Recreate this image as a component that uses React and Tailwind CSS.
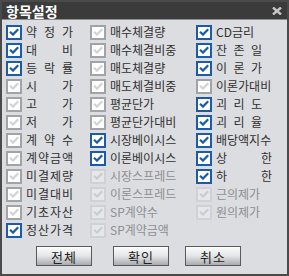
import React from "react";

function Box({ s }) {
  const cls =
    s === "on"
      ? "border-2 border-[#1c5ba6] bg-white"
      : s === "off"
      ? "border-2 border-[#a2a3a6] bg-white"
      : "border-2 border-[#d0d1d4] bg-[#e6e7ea]";
  const stroke = s === "on" ? "#1c5ba6" : s === "off" ? "#d2d3d5" : "#cbccce";
  return (
    <div className={`w-4 h-[15px] shrink-0 flex items-center justify-center ${cls}`}>
      <svg width="10" height="8" viewBox="0 0 10 8">
        <path d="M1 3.8 L4 6.6 L9.2 1.2" stroke={stroke} strokeWidth="2.2" fill="none" />
      </svg>
    </div>
  );
}

function Label({ t, w, s }) {
  const color = s === "dis" ? "text-[#8e8f92]" : "text-[#303030]";
  if (w) {
    const chars = t.split("");
    return (
      <div className={`flex justify-between ${color}`} style={{ width: w }}>
        {chars.map((c, i) => (
          <span key={i}>{c}</span>
        ))}
      </div>
    );
  }
  return <span className={`whitespace-nowrap ${color}`}>{t}</span>;
}

function Item({ t, w, s }) {
  return (
    <div className="h-[18px] flex items-center gap-1">
      <Box s={s} />
      <Label t={t} w={w} s={s} />
    </div>
  );
}

const col1 = [
  ["약정가", 47, "on"],
  ["대비", 47, "on"],
  ["등락률", 47, "on"],
  ["시가", 47, "off"],
  ["고가", 47, "off"],
  ["저가", 47, "off"],
  ["계약수", 47, "off"],
  ["계약금액", 47, "off"],
  ["미결제량", 47, "off"],
  ["미결대비", 47, "off"],
  ["기초자산", 47, "off"],
  ["정산가격", 47, "on"],
];
const col2 = [
  ["매수체결량", 0, "off"],
  ["매수체결비중", 0, "off"],
  ["매도체결량", 0, "off"],
  ["매도체결비중", 0, "off"],
  ["평균단가", 0, "off"],
  ["평균단가대비", 0, "off"],
  ["시장베이시스", 0, "on"],
  ["이론베이시스", 0, "on"],
  ["시장스프레드", 0, "dis"],
  ["이론스프레드", 0, "dis"],
  ["SP계약수", 0, "dis"],
  ["SP계약금액", 0, "dis"],
];
const col3 = [
  ["CD금리", 0, "on"],
  ["잔존일", 46, "on"],
  ["이론가", 46, "on"],
  ["이론가대비", 0, "off"],
  ["괴리도", 46, "on"],
  ["괴리율", 46, "on"],
  ["배당액지수", 0, "on"],
  ["상한", 56, "on"],
  ["하한", 56, "on"],
  ["근의제가", 0, "dis"],
  ["원의제가", 0, "dis"],
];

function Btn({ t, cls }) {
  return (
    <div
      className={`w-14 h-5 border border-[#5a5a5a] bg-gradient-to-b from-[#fbfbfb] via-[#e4e5e7] to-[#a9abae] flex items-center justify-center text-[13px] leading-none text-[#222] tracking-[1px] ${cls}`}
    >
      {t}
    </div>
  );
}

export default function App() {
  return (
    <div className="w-[289px] h-[276px] border-2 border-[#4a4a4a] bg-[#dcdde1] font-['Noto_Sans_CJK_KR',sans-serif] text-[12px] leading-none overflow-hidden">
      <div className="h-[17px] bg-[#3b3b3b] flex items-center justify-between pl-1 pr-[5px]">
        <span className="text-white font-bold text-[14px] leading-none">항목설정</span>
        <svg width="10" height="8" viewBox="0 0 10 8" className="mt-[1px]">
          <path d="M1 0.5 L9 7.5 M9 0.5 L1 7.5" stroke="#c6c6c6" strokeWidth="2.4" fill="none" />
        </svg>
      </div>
      <div className="h-px bg-[#8d8d8d]" />
      <div className="pl-1 pt-[3px] flex">
        <div className="w-[84px] flex flex-col">
          {col1.map(([t, w, s]) => (
            <Item key={t} t={t} w={w} s={s} />
          ))}
        </div>
        <div className="w-[106px] flex flex-col">
          {col2.map(([t, w, s]) => (
            <Item key={t} t={t} w={w} s={s} />
          ))}
        </div>
        <div className="flex flex-col">
          {col3.map(([t, w, s]) => (
            <Item key={t} t={t} w={w} s={s} />
          ))}
        </div>
      </div>
      <div className="flex pl-[34px] mt-[7px]">
        <Btn t="전체" cls="" />
        <Btn t="확인" cls="ml-[21px]" />
        <Btn t="취소" cls="ml-4" />
      </div>
    </div>
  );
}
